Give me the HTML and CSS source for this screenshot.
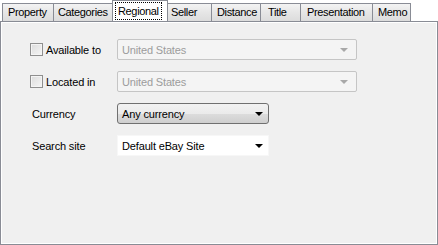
FILE: index.html
```html
<!DOCTYPE html>
<html lang="en">

<head>
    <meta charset="UTF-8">
    <meta name="viewport" content="width=device-width, initial-scale=1.0">
    <title>Search options</title>

    <link rel="stylesheet" href="styles.css">
</head>

<body>

    <div class="tabs">
        <div class="tab">Property</div>
        <div class="tab">Categories</div>
        <div class="tab active"><span class="focus">Regional</span></div>
        <div class="tab">Seller</div>
        <div class="tab">Distance</div>
        <div class="tab">Title</div>
        <div class="tab">Presentation</div>
        <div class="tab">Memo</div>
    </div>

    <section class="panel">

        <div class="row">
            <label class="check"><span class="box"></span>Available to</label>
            <div class="combo disabled">United States<span class="arrow"></span></div>
        </div>

        <div class="row">
            <label class="check"><span class="box"></span>Located in</label>
            <div class="combo disabled">United States<span class="arrow"></span></div>
        </div>

        <div class="row">
            <span class="label">Currency</span>
            <div class="combo button short">Any currency<span class="arrow"></span></div>
        </div>

        <div class="row">
            <span class="label">Search site</span>
            <div class="combo plain short">Default eBay Site<span class="arrow"></span></div>
        </div>

    </section>

</body>

</html>
```

FILE: styles.css
```css
* {
    margin: 0;
    padding: 0;
    box-sizing: border-box;
}

body {
    width: 438px;
    height: 245px;
    background-color: #ffffff;
    font-family: "Liberation Sans", Arial, sans-serif;
    font-size: 11px;
    letter-spacing: -0.15px;
    color: #000000;
    display: flex;
    flex-direction: column;
    overflow: hidden;
}

.tabs {
    display: flex;
    align-items: flex-end;
    height: 21px;
    padding-left: 2px;
    position: relative;
    z-index: 1;
    letter-spacing: -0.35px;
}

.tab {
    height: 18px;
    padding-left: 5px;
    border: 1px solid #898c95;
    border-bottom: none;
    border-left: none;
    background: linear-gradient(#f3f3f3, #e6e6e6 50%, #dcdcdc);
    display: flex;
    align-items: center;
    line-height: 1;
    white-space: nowrap;
}

/* tab widths as laid out by the original control */
.tab:nth-child(1) { width: 52px; border-left: 1px solid #898c95; }
.tab:nth-child(2) { width: 60px; padding-left: 4px; }
.tab:nth-child(4) { width: 46px; }
.tab:nth-child(5) { width: 49px; }
.tab:nth-child(6) { width: 40px; padding-left: 7px; }
.tab:nth-child(7) { width: 72px; padding-left: 6px; }
.tab:nth-child(8) { width: 38px; }

.tab.active {
    width: 56px;
    height: 21px;
    padding-left: 2px;
    margin: 0 -2px 0 -2px;
    border-left: 1px solid #898c95;
    background: #ffffff;
    position: relative;
    z-index: 2;
}

.focus {
    border: 1px dotted #000000;
    padding: 3px 2px 2px;
}

.panel {
    flex: 1;
    background-color: #f0f0f0;
    border: 1px solid #898c95;
    box-shadow: inset 1px 1px 0 #ffffff, inset -1px -1px 0 #ffffff;
    padding: 17px 0 0 29px;
    display: flex;
    flex-direction: column;
    gap: 11px;
}

.row {
    display: grid;
    grid-template-columns: 87px auto;
    align-items: center;
    height: 21px;
}

.check {
    display: flex;
    align-items: center;
    gap: 3px;
}

.box {
    width: 13px;
    height: 13px;
    border: 1px solid #8f8f8f;
    background: linear-gradient(135deg, #dcdcdc, #f5f5f5);
    box-shadow: inset 0 0 0 1px #f4f4f4;
}

.label {
    padding-left: 2px;
}

.combo {
    width: 240px;
    height: 21px;
    padding-left: 4px;
    display: flex;
    align-items: center;
    justify-content: space-between;
    border-radius: 2px;
}

.combo.short {
    width: 152px;
}

.arrow {
    width: 0;
    height: 0;
    margin-right: 5px;
    border-left: 4px solid transparent;
    border-right: 4px solid transparent;
    border-top: 4px solid #000000;
}

.disabled {
    border: 1px solid #c5c5c5;
    color: #9c9c9c;
    background-color: #f4f4f4;
}

.disabled .arrow {
    border-top-color: #a8a8a8;
    margin-right: 8px;
}

.button {
    border: 1px solid #707070;
    border-radius: 3px;
    background: linear-gradient(#f2f2f2, #ebebeb 50%, #dddddd 51%, #cfcfcf);
}

.plain {
    border: 1px solid #f7f7f7;
    background-color: #ffffff;
    border-radius: 0;
}
```
